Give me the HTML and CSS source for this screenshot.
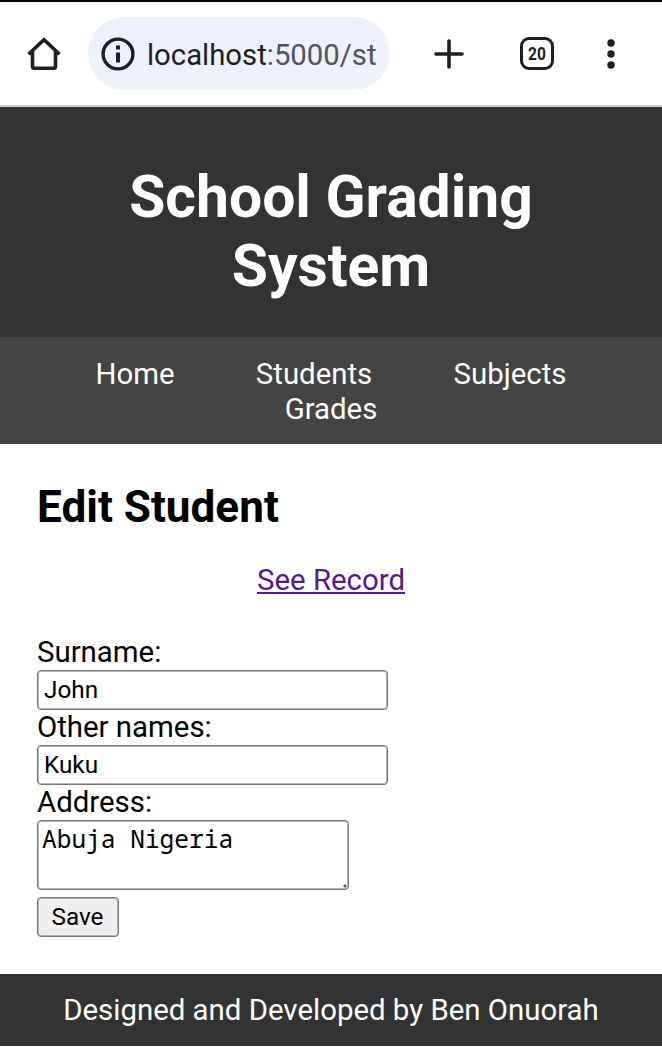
FILE: index.html
```html
<!DOCTYPE html>
<html lang="en">
<head>
  <meta charset="UTF-8">
  <meta name="viewport" content="width=device-width, initial-scale=1.0">
  <title>School Grading System</title>
  <link rel="stylesheet" href="styles.css">
</head>
<body>

<div class="browser-bar">
  <svg class="home-icon" width="34" height="34" viewBox="0 0 34 34">
    <path d="M1.5 17.2 L17 2.6 L32.5 17.2 M5.5 14.5 V29.5 Q5.5 31.2 7.2 31.2 H26.8 Q28.5 31.2 28.5 29.5 V14.5" fill="none" stroke="#1f1f1f" stroke-width="3.6"/>
  </svg>
  <div class="url">
    <svg width="34" height="34" viewBox="0 0 34 34">
      <circle cx="17" cy="17" r="14.9" fill="none" stroke="#1f1f1f" stroke-width="3.4"/>
      <path d="M15 8.4h4v4h-4z M15 15.4h4v10h-4z" fill="#1f1f1f"/>
    </svg>
    <span class="address"><span class="host">localhost</span>:5000/st</span>
  </div>
  <svg class="plus-icon" width="30" height="30" viewBox="0 0 30 30">
    <path d="M15 2 V28 M2 15 H28" stroke="#1f1f1f" stroke-width="3.6" stroke-linecap="round"/>
  </svg>
  <div class="tabs"><span>20</span></div>
  <svg class="menu-icon" width="8" height="30" viewBox="0 0 8 30">
    <circle cx="4" cy="4" r="3.7" fill="#1f1f1f"/>
    <circle cx="4" cy="15" r="3.7" fill="#1f1f1f"/>
    <circle cx="4" cy="26" r="3.7" fill="#1f1f1f"/>
  </svg>
</div>

<header>
  <h1>School Grading System</h1>
</header>

<nav>
  <a href="#">Home</a>
  <a href="#">Students</a>
  <a href="#">Subjects</a>
  <a href="#">Grades</a>
</nav>

<main>
  <h2>Edit Student</h2>
  <p class="record"><a href="#">See Record</a></p>
  <form>
    <label for="surname">Surname:</label>
    <input type="text" id="surname" value="John">
    <label for="other-names">Other names:</label>
    <input type="text" id="other-names" value="Kuku">
    <label for="address">Address:</label>
    <textarea id="address">Abuja Nigeria</textarea>
    <button type="button">Save</button>
  </form>
</main>

<footer>Designed and Developed by Ben Onuorah</footer>

</body>
</html>
```

FILE: styles.css
```css
* {
  box-sizing: border-box;
}
body {
  font-family: Roboto, sans-serif;
  font-size: 29.4px;
  line-height: 35px;
  margin: 0;
  background-color: #fff;
  color: #000;
}
.browser-bar {
  display: flex;
  align-items: center;
  height: 107px;
  padding-left: 27px;
  border-top: 2px solid #000;
  border-bottom: 2px solid #d0d0d0;
}
.url {
  display: flex;
  align-items: center;
  width: 302px;
  height: 73px;
  margin-left: 27px;
  padding-left: 13px;
  border-radius: 37px;
  background-color: #ecf1fa;
}
.address {
  margin-left: 12px;
  padding-top: 3px;
  white-space: nowrap;
  color: #50535a;
  font-size: 29.3px;
}
.host {
  color: #1f1f1f;
}
.plus-icon {
  margin-left: 44px;
}
.tabs {
  display: flex;
  align-items: center;
  justify-content: center;
  width: 34px;
  height: 33px;
  margin-left: 56px;
  border: 3.5px solid #1f1f1f;
  border-radius: 9px;
  color: #1f1f1f;
  font-size: 19px;
  font-weight: bold;
}
.tabs span {
  transform: scaleX(0.82);
}
.menu-icon {
  margin-left: 53px;
}
header {
  height: 230px;
  padding: 55px 92px 0;
  background-color: #333;
  color: #fff;
  text-align: center;
}
h1 {
  margin: 0;
  font-size: 58.8px;
  line-height: 69px;
}
nav {
  height: 107px;
  padding-top: 20px;
  background-color: #444;
  text-align: center;
}
nav a {
  margin: 0 37px;
  color: #fff;
  text-decoration: none;
}
main {
  height: 530px;
  padding: 37px 37px 0;
}
h2 {
  margin: 0;
  font-size: 44.1px;
  line-height: 52px;
}
.record {
  margin: 30px 0 37px;
  text-align: center;
}
.record a {
  color: #551a8b;
}
label, input, textarea, button {
  display: block;
}
input, textarea, button {
  margin: 0;
  border: 1px solid #767676;
  border-radius: 4px;
  box-shadow: inset 0 0 0 1px #b4b4b4;
  color: #000;
  font-family: Roboto, sans-serif;
  font-size: 24.3px;
}
input {
  width: 351px;
  height: 40px;
  padding: 0 6px 1px;
}
textarea {
  width: 312px;
  height: 70px;
  padding: 3px 4px;
  resize: none;
  background: radial-gradient(circle at 307px 65px, #555 1px, #fff 2px);
  font-family: "Droid Sans Mono", "Noto Sans Mono", "DejaVu Sans Mono", monospace;
  font-size: 24.5px;
  line-height: 29px;
}
button {
  width: 82px;
  height: 40px;
  margin-top: 7px;
  padding: 0 1px 1px 0;
  background-color: #efefef;
}
footer {
  height: 72px;
  padding-top: 19px;
  background-color: #333;
  color: #fff;
  text-align: center;
}
```
